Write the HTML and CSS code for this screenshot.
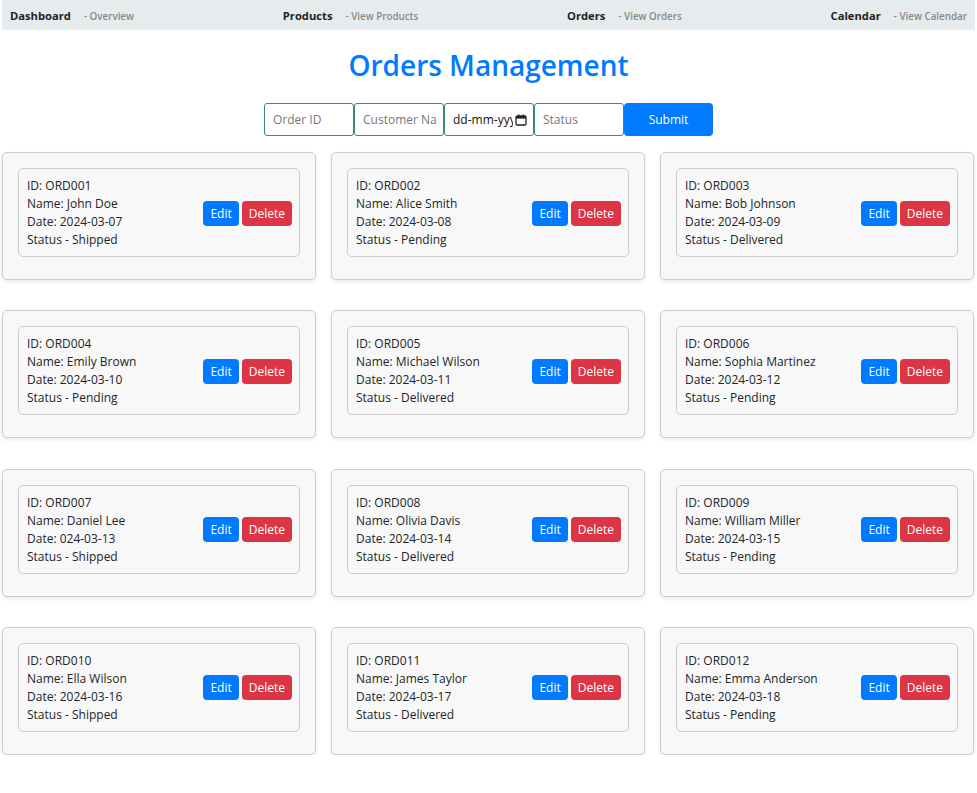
FILE: index.html
```html
<!DOCTYPE html>
<html lang="en">
<head>
<meta charset="utf-8">
<title>Orders Management</title>
<link rel="stylesheet" href="styles.css">
</head>
<body>
<nav class="topnav">
  <div class="nav-item"><span class="nav-title">Dashboard</span><span class="nav-sub">- Overview</span></div>
  <div class="nav-item"><span class="nav-title">Products</span><span class="nav-sub">- View Products</span></div>
  <div class="nav-item"><span class="nav-title">Orders</span><span class="nav-sub">- View Orders</span></div>
  <div class="nav-item"><span class="nav-title">Calendar</span><span class="nav-sub">- View Calendar</span></div>
</nav>

<h1 class="page-title">Orders Management</h1>

<form class="order-form">
  <input class="field" type="text" placeholder="Order ID">
  <input class="field" type="text" placeholder="Customer Name">
  <div class="field date-field">
    <span class="date-text">dd-mm-yyyy</span>
    <svg class="cal-icon" width="12" height="12" viewBox="0 0 12 12" aria-hidden="true">
      <rect x="1" y="2" width="10" height="9" rx="1.2" fill="none" stroke="#222" stroke-width="1.3"/>
      <rect x="1" y="2" width="10" height="2.6" fill="#222"/>
      <rect x="3" y="0.5" width="1.3" height="2.5" fill="#222"/>
      <rect x="7.7" y="0.5" width="1.3" height="2.5" fill="#222"/>
    </svg>
  </div>
  <input class="field" type="text" placeholder="Status">
  <button class="submit-btn" type="button">Submit</button>
</form>

<main class="cards">
  <div class="card"><div class="order"><div class="info"><div>ID: ORD001</div><div>Name: John Doe</div><div>Date: 2024-03-07</div><div>Status - Shipped</div></div><div class="actions"><button class="btn btn-edit">Edit</button><button class="btn btn-delete">Delete</button></div></div></div>
  <div class="card"><div class="order"><div class="info"><div>ID: ORD002</div><div>Name: Alice Smith</div><div>Date: 2024-03-08</div><div>Status - Pending</div></div><div class="actions"><button class="btn btn-edit">Edit</button><button class="btn btn-delete">Delete</button></div></div></div>
  <div class="card"><div class="order"><div class="info"><div>ID: ORD003</div><div>Name: Bob Johnson</div><div>Date: 2024-03-09</div><div>Status - Delivered</div></div><div class="actions"><button class="btn btn-edit">Edit</button><button class="btn btn-delete">Delete</button></div></div></div>
  <div class="card"><div class="order"><div class="info"><div>ID: ORD004</div><div>Name: Emily Brown</div><div>Date: 2024-03-10</div><div>Status - Pending</div></div><div class="actions"><button class="btn btn-edit">Edit</button><button class="btn btn-delete">Delete</button></div></div></div>
  <div class="card"><div class="order"><div class="info"><div>ID: ORD005</div><div>Name: Michael Wilson</div><div>Date: 2024-03-11</div><div>Status - Delivered</div></div><div class="actions"><button class="btn btn-edit">Edit</button><button class="btn btn-delete">Delete</button></div></div></div>
  <div class="card"><div class="order"><div class="info"><div>ID: ORD006</div><div>Name: Sophia Martinez</div><div>Date: 2024-03-12</div><div>Status - Pending</div></div><div class="actions"><button class="btn btn-edit">Edit</button><button class="btn btn-delete">Delete</button></div></div></div>
  <div class="card"><div class="order"><div class="info"><div>ID: ORD007</div><div>Name: Daniel Lee</div><div>Date: 024-03-13</div><div>Status - Shipped</div></div><div class="actions"><button class="btn btn-edit">Edit</button><button class="btn btn-delete">Delete</button></div></div></div>
  <div class="card"><div class="order"><div class="info"><div>ID: ORD008</div><div>Name: Olivia Davis</div><div>Date: 2024-03-14</div><div>Status - Delivered</div></div><div class="actions"><button class="btn btn-edit">Edit</button><button class="btn btn-delete">Delete</button></div></div></div>
  <div class="card"><div class="order"><div class="info"><div>ID: ORD009</div><div>Name: William Miller</div><div>Date: 2024-03-15</div><div>Status - Pending</div></div><div class="actions"><button class="btn btn-edit">Edit</button><button class="btn btn-delete">Delete</button></div></div></div>
  <div class="card"><div class="order"><div class="info"><div>ID: ORD010</div><div>Name: Ella Wilson</div><div>Date: 2024-03-16</div><div>Status - Shipped</div></div><div class="actions"><button class="btn btn-edit">Edit</button><button class="btn btn-delete">Delete</button></div></div></div>
  <div class="card"><div class="order"><div class="info"><div>ID: ORD011</div><div>Name: James Taylor</div><div>Date: 2024-03-17</div><div>Status - Delivered</div></div><div class="actions"><button class="btn btn-edit">Edit</button><button class="btn btn-delete">Delete</button></div></div></div>
  <div class="card"><div class="order"><div class="info"><div>ID: ORD012</div><div>Name: Emma Anderson</div><div>Date: 2024-03-18</div><div>Status - Pending</div></div><div class="actions"><button class="btn btn-edit">Edit</button><button class="btn btn-delete">Delete</button></div></div></div>
</main>
</body>
</html>
```
FILE: styles.css
```css
* { box-sizing: border-box; }

body {
  margin: 0;
  padding: 0 2px;
  font-family: "Open Sans", "Noto Sans", Arial, sans-serif;
  font-size: 12px;
  color: #212529;
  background: #fff;
}

.topnav {
  display: flex;
  justify-content: space-between;
  align-items: center;
  height: 30px;
  padding: 0 8px;
  background: #e6eced;
}

.nav-title {
  font-weight: 700;
  font-size: 11.2px;
  color: #222;
}

.nav-sub {
  margin-left: 13px;
  font-weight: 600;
  font-size: 9.8px;
  color: #888;
}

.page-title {
  margin: 16px 0 19px;
  text-align: center;
  font-size: 28px;
  line-height: 38px;
  font-weight: 600;
  color: #007bff;
}

.order-form {
  display: flex;
  justify-content: center;
  margin: 0 0 16px;
}

.field {
  width: 90px;
  height: 33px;
  margin: 0;
  padding: 0 6px 0 8px;
  border: 1px solid #3d8a70;
  border-radius: 3px;
  font-family: inherit;
  font-size: 12px;
  color: #212529;
  background: #fff;
  outline: none;
}

.field::placeholder { color: #777; }

.date-field {
  display: flex;
  align-items: center;
  gap: 2px;
  padding: 0 6px 0 8px;
  overflow: hidden;
}

.date-text {
  flex: 1;
  min-width: 0;
  overflow: hidden;
  white-space: nowrap;
  font-size: 12px;
  color: #111;
}

.cal-icon { flex: none; }

.submit-btn {
  width: 89px;
  height: 33px;
  border: none;
  border-radius: 4px;
  background: #007bff;
  color: #fff;
  font-family: inherit;
  font-size: 12px;
}

.cards {
  display: grid;
  grid-template-columns: repeat(3, 314px);
  column-gap: 15px;
  row-gap: 30.3px;
}

.card {
  padding: 15px 15px 22px;
  background: #f8f8f8;
  border: 1px solid #ccc;
  border-radius: 5px;
  box-shadow: 0 2px 4px rgba(0, 0, 0, 0.08);
}

.order {
  display: flex;
  align-items: center;
  justify-content: space-between;
  padding: 8px 7px 7px 8px;
  border: 1px solid #ccc;
  border-radius: 5px;
}

.info {
  line-height: 18px;
  font-size: 12px;
  color: #212529;
}

.actions {
  display: flex;
  gap: 3px;
}

.btn {
  height: 25px;
  padding: 0 7px;
  border: none;
  border-radius: 4px;
  color: #fff;
  font-family: inherit;
  font-size: 12px;
}

.btn-edit { background: #007bff; }
.btn-delete { background: #dc3545; }
```
